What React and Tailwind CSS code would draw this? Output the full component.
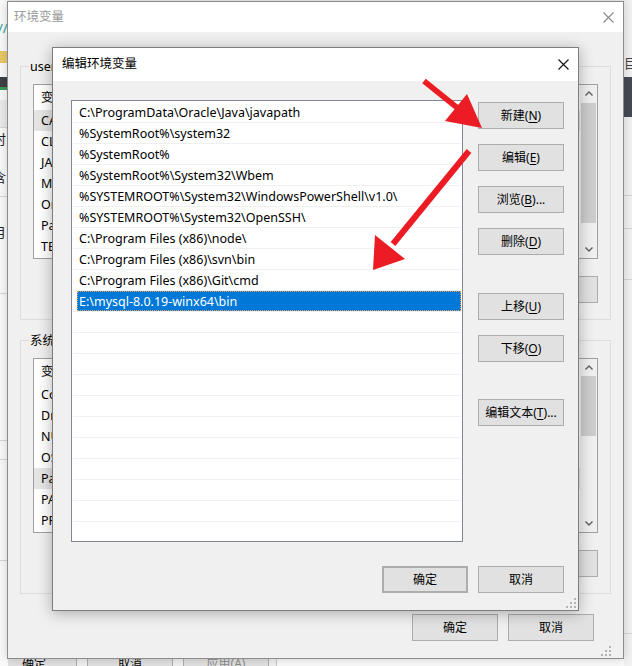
import React from 'react'

const FONT = "font-['Noto_Sans','Noto_Sans_CJK_SC',sans-serif]"

const paths = [
  'C:\\ProgramData\\Oracle\\Java\\javapath',
  '%SystemRoot%\\system32',
  '%SystemRoot%',
  '%SystemRoot%\\System32\\Wbem',
  '%SYSTEMROOT%\\System32\\WindowsPowerShell\\v1.0\\',
  '%SYSTEMROOT%\\System32\\OpenSSH\\',
  'C:\\Program Files (x86)\\node\\',
  'C:\\Program Files (x86)\\svn\\bin',
  'C:\\Program Files (x86)\\Git\\cmd',
  'E:\\mysql-8.0.19-winx64\\bin',
]

const userVars = ['CATALINA_HOME', 'CLASSPATH', 'JAVA_HOME', 'MYSQL_HOME', 'OneDrive', 'Path', 'TEMP']
const sysVars = ['ComSpec', 'DriverData', 'NUMBER_OF_PROCESSORS', 'OS', 'Path', 'PATHEXT', 'PROCESSOR_ARCHITECTURE']

function Btn({ children, className = '' }) {
  return (
    <div className={`flex h-[27px] w-[86px] shrink-0 items-center justify-center border border-[#adadad] bg-[#e1e1e1] text-[12px] leading-none text-black ${className}`}>
      {children}
    </div>
  )
}

function Key({ text, k, tail = '' }) {
  return (
    <span>
      {text}(<span className="underline underline-offset-[2px]">{k}</span>){tail}
    </span>
  )
}

function Chevron({ up }) {
  return (
    <svg width="8" height="5" viewBox="0 0 8 5">
      <polyline points={up ? '0.5,4.5 4,1 7.5,4.5' : '0.5,0.5 4,4 7.5,0.5'} fill="none" stroke="#606060" strokeWidth="1.4" />
    </svg>
  )
}

function Grip() {
  return (
    <svg width="10" height="10" viewBox="0 0 10 10">
      <rect x="8" y="0" width="2" height="2" fill="#b4b4b4" />
      <rect x="4" y="4" width="2" height="2" fill="#b4b4b4" />
      <rect x="8" y="4" width="2" height="2" fill="#b4b4b4" />
      <rect x="0" y="8" width="2" height="2" fill="#b4b4b4" />
      <rect x="4" y="8" width="2" height="2" fill="#b4b4b4" />
      <rect x="8" y="8" width="2" height="2" fill="#b4b4b4" />
    </svg>
  )
}

function Close({ color }) {
  return (
    <svg width="11" height="11" viewBox="0 0 11 11">
      <path d="M0.5 0.5 L10.5 10.5 M10.5 0.5 L0.5 10.5" stroke={color} strokeWidth="1.1" />
    </svg>
  )
}

function VarList({ rows, sel, thumb }) {
  return (
    <div className="flex h-[175px] border border-[#a0a0a0] bg-white">
      <div className="flex-1 overflow-hidden">
        <div className="flex h-[25px] items-center pl-[7px] pt-[2px] text-[12.5px] text-black">
          <span className="w-[160px]">变量</span>
          <span>值</span>
        </div>
        {rows.map((r, i) => (
          <div key={r} className={`flex h-[21px] items-center pl-[7px] pt-[2px] text-[12.5px] text-black ${i === sel ? 'bg-[#e5e5e5]' : ''}`}>
            {r}
          </div>
        ))}
      </div>
      <div className="flex w-[17px] shrink-0 flex-col bg-[#f0f0f0]">
        <div className="flex h-[17px] items-center justify-center"><Chevron up /></div>
        <div className="flex-1">
          <div className={`mx-[1px] bg-[#cdcdcd] ${thumb}`} />
        </div>
        <div className="flex h-[17px] items-center justify-center"><Chevron /></div>
      </div>
    </div>
  )
}

function Group({ title, children }) {
  return (
    <fieldset className="border border-[#dcdcdc] px-[12px] pb-[16px] pt-[9px]">
      <legend className="-ml-[4px] px-[1px] pt-[2px] text-[12.5px] leading-[16px] text-black">{title}</legend>
      {children}
    </fieldset>
  )
}

function GroupButtons() {
  return (
    <div className="mt-[17px] flex justify-end gap-[10px]">
      <Btn><Key text="新建" k="W" tail="..." /></Btn>
      <Btn><Key text="编辑" k="I" tail="..." /></Btn>
      <Btn><Key text="删除" k="L" /></Btn>
    </div>
  )
}

function BackWindow() {
  return (
    <div className="absolute left-[7px] top-[1px] flex h-[658px] w-[617px] flex-col border border-[#8c8c8c] bg-[#f0f0f0] shadow-[0_0_10px_rgba(0,0,0,0.18)]">
      <div className="flex h-[30px] shrink-0 items-center justify-between bg-white pl-[6px] pr-[9px]">
        <span className="text-[12.5px] text-[#9a9a9a]">环境变量</span>
        <Close color="#8a8a8a" />
      </div>
      <div className="flex flex-1 flex-col px-[12px] pt-[25px]">
        <Group title="user 的用户变量(U)">
          <VarList rows={userVars} sel={0} thumb="mt-[1px] h-[120px]" />
          <GroupButtons />
        </Group>
        <div className="mt-[11px]">
          <Group title="系统变量(S)">
            <VarList rows={sysVars} sel={4} thumb="h-[60px]" />
            <GroupButtons />
          </Group>
        </div>
        <div className="mt-[20px] flex justify-end gap-[10px] pr-[17px]">
          <Btn>确定</Btn>
          <Btn>取消</Btn>
        </div>
        <div className="mt-auto flex justify-end pb-[2px]"><Grip /></div>
      </div>
    </div>
  )
}

function PathList() {
  const empty = Array.from({ length: 11 })
  return (
    <div className="h-[442px] w-[392px] shrink-0 overflow-hidden border border-[#828790] bg-white pt-[1px]">
      {paths.map((p, i) =>
        i === paths.length - 1 ? (
          <div key={p} className="mx-[1px] h-[21px] border-b border-[#f0f0f0]">
            <div className="ml-[4px] flex h-[20px] items-center bg-[#0078d7] pl-[2px] pt-[2px] text-[12.5px] text-white outline-1 outline-dotted outline-offset-[-1px] outline-[#e8a060]">
              {p}
            </div>
          </div>
        ) : (
          <div key={p} className="mx-[1px] flex h-[21px] items-center border-b border-[#f0f0f0] pl-[6px] pt-[2px] text-[12.5px] text-black">
            {p}
          </div>
        )
      )}
      {empty.map((_, i) => (
        <div key={i} className="mx-[1px] h-[21px] border-b border-[#f0f0f0]" />
      ))}
    </div>
  )
}

function EditDialog() {
  return (
    <div className="absolute left-[52px] top-[47px] flex h-[564px] w-[527px] flex-col border border-[#7d7d7d] bg-[#f0f0f0] shadow-[0_2px_14px_rgba(0,0,0,0.3)]">
      <div className="flex h-[33px] shrink-0 items-center justify-between bg-white pl-[9px] pr-[9px]">
        <span className="text-[12.5px] text-black">编辑环境变量</span>
        <Close color="#111" />
      </div>
      <div className="flex pl-[18px] pt-[19px]">
        <PathList />
        <div className="ml-[15px] flex flex-col pt-[2px]">
          <Btn><Key text="新建" k="N" /></Btn>
          <Btn className="mt-[15px]"><Key text="编辑" k="E" /></Btn>
          <Btn className="mt-[15px]"><Key text="浏览" k="B" tail="..." /></Btn>
          <Btn className="mt-[15px]"><Key text="删除" k="D" /></Btn>
          <Btn className="mt-[38px]"><Key text="上移" k="U" /></Btn>
          <Btn className="mt-[15px]"><Key text="下移" k="O" /></Btn>
          <Btn className="mt-[37px]"><Key text="编辑文本" k="T" tail="..." /></Btn>
        </div>
      </div>
      <div className="mt-[24px] flex justify-end gap-[10px] pr-[14px]">
        <Btn className="border-2 border-[#0078d7]">确定</Btn>
        <Btn>取消</Btn>
      </div>
      <div className="mt-auto flex justify-end pb-[2px] pr-[2px]"><Grip /></div>
    </div>
  )
}

function LeftEdge() {
  return (
    <div className="absolute left-0 top-0 flex h-[666px] w-[8px] flex-col overflow-hidden bg-[#fafafa]">
      <div className="h-[18px]" />
      <div className="-ml-[2px] h-[20px] text-[13px] leading-[20px] text-[#2f9c9c]">//</div>
      <div className="h-[13px]" />
      <div className="-ml-[3px] h-[12px] w-[10px] rounded-[1px] bg-[#e9c868]" />
      <div className="h-[14px]" />
      <div className="h-[13px] border-b-[3px] border-[#3c9a58] bg-[#3d4045]" />
      <div className="h-[10px]" />
      <div className="h-[28px] border-b border-[#d8d8d8] bg-[#ebebeb]" />
      <div className="-ml-[7px] mt-[2px] h-[20px] text-[13px] text-[#222]">时</div>
      <div className="-ml-[7px] mt-[18px] h-[20px] text-[13px] text-[#222]">含</div>
      <div className="mt-[8px] h-[1px] bg-[#d8d8d8]" />
      <div className="-ml-[7px] mt-[26px] h-[20px] text-[13px] text-[#222]">月</div>
      <div className="mt-[50px] h-[1px] bg-[#d8d8d8]" />
      <div className="mt-[146px] h-[1px] bg-[#d8d8d8]" />
      <div className="mt-[18px] h-[1px] bg-[#d8d8d8]" />
      <div className="mt-[100px] h-[1px] bg-[#d8d8d8]" />
    </div>
  )
}

function RightEdge() {
  return (
    <div className="absolute left-[624px] top-0 flex h-[666px] w-[8px] flex-col overflow-hidden bg-[#f2f2f2]">
      <div className="h-[54px]" />
      <div className="h-[18px] text-[13px] leading-[18px] text-[#444]">目</div>
      <div className="h-[5px]" />
      <div className="h-[40px] bg-[#454a52]" />
      <div className="h-[78px]" />
      <div className="h-[1px] bg-[#d6d6d6]" />
      <div className="h-[32px]" />
      <div className="h-[1px] bg-[#d6d6d6]" />
      <div className="h-[50px]" />
      <div className="h-[1px] bg-[#d6d6d6]" />
      <div className="h-[353px]" />
      <div className="h-[1px] bg-[#d6d6d6]" />
    </div>
  )
}

function BottomEdge() {
  return (
    <div className="absolute left-0 top-[650px] flex h-[20px] w-[632px] items-start overflow-hidden bg-[#f0f0f0]">
      <div className="flex gap-[10px] pl-0">
        <Btn className="-ml-[9px]">确定</Btn>
        <Btn>取消</Btn>
        <Btn className="bg-[#cccccc] text-[#8c8c8c]"><span className="text-[#8c8c8c]">应用(A)</span></Btn>
      </div>
      <div className="ml-[7px] h-[20px] flex-1 border-l border-[#c8c8c8] bg-[#fafafa]" />
    </div>
  )
}

function Arrows() {
  return (
    <svg className="pointer-events-none absolute left-0 top-0" width="632" height="666" viewBox="0 0 632 666">
      <line x1="424" y1="81" x2="460" y2="110" stroke="#ec1c24" strokeWidth="5.5" />
      <polygon points="482,128 445,121 467,94" fill="#ec1c24" />
      <line x1="469" y1="151" x2="393" y2="244" stroke="#ec1c24" strokeWidth="6" />
      <polygon points="373,270 375,235 405,259" fill="#ec1c24" />
    </svg>
  )
}

export default function App() {
  return (
    <div className={`relative h-[666px] w-[632px] overflow-hidden bg-[#f0f0f0] ${FONT}`}>
      <BottomEdge />
      <LeftEdge />
      <RightEdge />
      <BackWindow />
      <EditDialog />
      <Arrows />
    </div>
  )
}
